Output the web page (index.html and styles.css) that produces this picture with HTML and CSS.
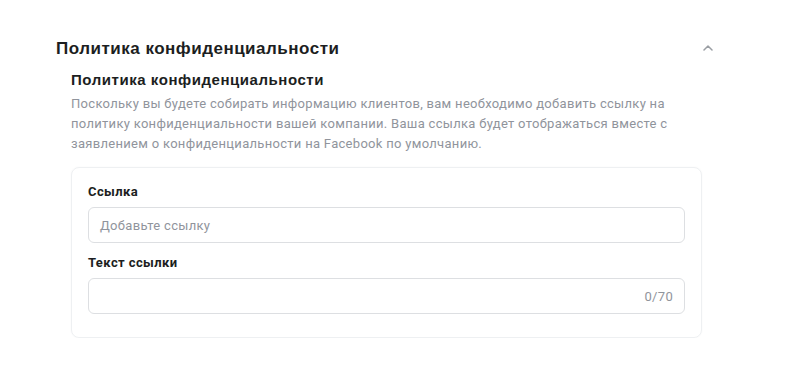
FILE: index.html
```html
<!DOCTYPE html>
<html lang="ru">
<head>
<meta charset="utf-8">
<link rel="stylesheet" href="styles.css">
</head>
<body>
<section class="section">
  <div class="section-head">
    <h2 class="section-title">Политика конфиденциальности</h2>
    <svg class="chevron" width="10" height="6" viewBox="0 0 10 6"><path d="M1 5 L5 1 L9 5" fill="none" stroke="#9a9ea3" stroke-width="1.5" stroke-linecap="round" stroke-linejoin="round"/></svg>
  </div>
  <div class="section-body">
    <h3 class="sub-title">Политика конфиденциальности</h3>
    <p class="desc">Поскольку вы будете собирать информацию клиентов, вам необходимо добавить ссылку на политику конфиденциальности вашей компании. Ваша ссылка будет отображаться вместе с заявлением о конфиденциальности на Facebook по умолчанию.</p>
    <div class="card">
      <label class="field-label">Ссылка</label>
      <div class="input"><span class="placeholder">Добавьте ссылку</span></div>
      <label class="field-label">Текст ссылки</label>
      <div class="input input-right"><span class="counter">0/70</span></div>
    </div>
  </div>
</section>
</body>
</html>
```
FILE: styles.css
```css
* { box-sizing: border-box; }
body {
  margin: 0;
  background: #fff;
  font-family: Roboto, "Liberation Sans", Arial, sans-serif;
  color: #1c1e21;
}
.section {
  padding: 38px 0 0 56px;
}
.section-head {
  display: flex;
  align-items: center;
  justify-content: space-between;
  width: 657px;
  height: 22px;
}
.section-title {
  margin: 0;
  font-family: "Liberation Sans", Arial, sans-serif;
  font-size: 17px;
  font-weight: 700;
  letter-spacing: 0.5px;
  line-height: 22px;
}
.chevron { margin-top: -3px; }
.section-body {
  padding-left: 15px;
  width: 646px;
}
.sub-title {
  margin: 11px 0 0;
  font-family: "Liberation Sans", Arial, sans-serif;
  font-size: 15px;
  font-weight: 700;
  letter-spacing: 0.55px;
  line-height: 18px;
}
.desc {
  margin: 5px 0 0;
  font-size: 13px;
  letter-spacing: 0.3px;
  line-height: 20px;
  color: #90949c;
}
.card {
  margin-top: 13px;
  border: 1px solid #eef0f2;
  border-radius: 8px;
  box-shadow: 0 0 2px rgba(0, 0, 0, 0.04);
  padding: 16px 16px 23px;
  display: flex;
  flex-direction: column;
}
.field-label {
  font-size: 13px;
  font-weight: 700;
  letter-spacing: 0.4px;
  line-height: 16px;
  margin-bottom: 7px;
}
.input {
  height: 36px;
  border: 1px solid #dddfe2;
  border-radius: 6px;
  display: flex;
  align-items: center;
  padding: 0 11px;
  margin-bottom: 12px;
}
.input:last-child { margin-bottom: 0; }
.input-right { justify-content: flex-end; }
.placeholder, .counter {
  font-size: 13px;
  letter-spacing: 0.3px;
  color: #90949c;
}
```
